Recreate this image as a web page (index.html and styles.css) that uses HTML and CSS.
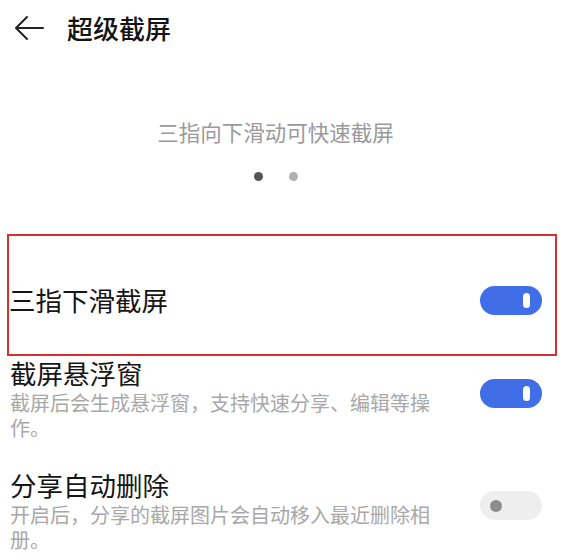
FILE: index.html
```html
<!DOCTYPE html>
<html lang="zh-CN">
<head>
    <meta charset="UTF-8">
    <meta name="viewport" content="width=device-width, initial-scale=1.0">
    <title>超级截屏</title>
    <link rel="stylesheet" href="styles.css">
</head>
<body>
    <header class="top-bar">
        <svg class="back" width="32" height="26" viewBox="0 0 32 26">
            <path d="M30 13H3M14 2L3 13l11 11" fill="none" stroke="#222" stroke-width="2" stroke-linecap="round" stroke-linejoin="round"/>
        </svg>
        <h1>超级截屏</h1>
    </header>

    <section class="guide">
        <p class="guide-text">三指向下滑动可快速截屏</p>
        <div class="dots">
            <span class="dot active"></span>
            <span class="dot"></span>
        </div>
    </section>

    <div class="highlight">
        <div class="row row-main">
            <div class="row-text">
                <div class="row-title">三指下滑截屏</div>
            </div>
            <span class="switch on"><i></i></span>
        </div>
    </div>

    <div class="row">
        <div class="row-text">
            <div class="row-title">截屏悬浮窗</div>
            <div class="row-desc">截屏后会生成悬浮窗，支持快速分享、编辑等操作。</div>
        </div>
        <span class="switch on"><i></i></span>
    </div>

    <div class="row">
        <div class="row-text">
            <div class="row-title">分享自动删除</div>
            <div class="row-desc">开启后，分享的截屏图片会自动移入最近删除相册。</div>
        </div>
        <span class="switch"><i></i></span>
    </div>
</body>
</html>
```

FILE: styles.css
```css
body {
    margin: 0;
    font-family: "Noto Sans CJK SC", "Noto Sans", sans-serif;
    background: #fff;
    color: #151515;
}
.top-bar {
    height: 56px;
    display: flex;
    align-items: center;
    padding-left: 13px;
    gap: 22px;
}
.top-bar h1 {
    margin: 0;
    font-size: 26px;
    font-weight: 500;
    line-height: 34px;
}
.guide {
    margin-top: 62px;
    padding-right: 13px;
    text-align: center;
}
.guide-text {
    margin: 0;
    font-size: 21.5px;
    line-height: 28px;
    color: #9a9a9a;
}
.dots {
    display: flex;
    justify-content: center;
    gap: 26px;
    margin-top: 26px;
}
.dot {
    width: 9px;
    height: 9px;
    border-radius: 50%;
    background: #b0b0b0;
}
.dot.active {
    background: #555;
}
.highlight {
    margin: 53px 7px 0;
    height: 118px;
    border: 2px solid #d5322d;
    display: flex;
    align-items: center;
}
.row {
    display: flex;
    justify-content: space-between;
    align-items: flex-start;
    padding: 0 22px 0 10px;
}
.row-main {
    flex: 1;
    align-items: center;
    padding: 14px 13px 0 0;
}
.highlight + .row {
    margin-top: 2px;
}
.row + .row {
    margin-top: 28px;
}
.row-text {
    width: 425px;
    /* latin metrics keep the line boxes tight, CJK glyphs fall back */
    font-family: "Liberation Sans", "Noto Sans CJK SC", sans-serif;
}
.row-title {
    font-size: 26.5px;
    line-height: 34px;
}
.row-desc {
    font-size: 20px;
    line-height: 25px;
    color: #a8a8a8;
}
.switch {
    width: 62px;
    height: 29px;
    margin-top: 21px;
    border-radius: 15px;
    background: #eeeeee;
    display: flex;
    align-items: center;
    padding-left: 10px;
    box-sizing: border-box;
}
.row-main .switch {
    margin-top: -4px;
}
.switch i {
    width: 12px;
    height: 12px;
    border-radius: 50%;
    background: #8c8c8c;
}
.switch.on {
    background: #3f6ee6;
    justify-content: flex-end;
    padding: 0 12px 0 0;
}
.switch.on i {
    width: 7px;
    height: 15px;
    border-radius: 4px;
    background: #fff;
}
```
